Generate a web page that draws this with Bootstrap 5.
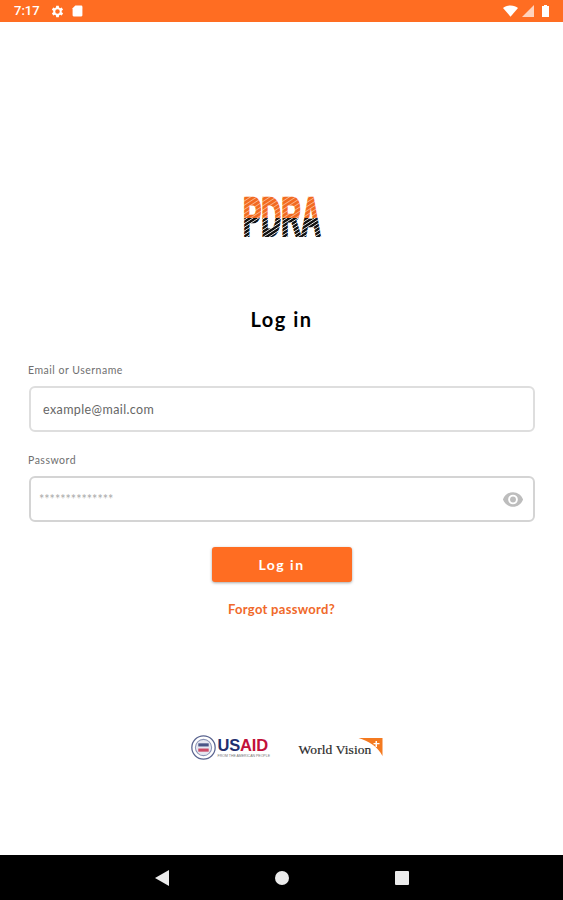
<!DOCTYPE html>
<html lang="en">
<head>
  <meta charset="UTF-8">
  <meta name="viewport" content="width=device-width, initial-scale=1.0">
  <title>PDRA - Log in</title>
  <link href="https://cdn.jsdelivr.net/npm/bootstrap@5.3.0/dist/css/bootstrap.min.css" rel="stylesheet">
  <style>
    body {
      font-family: 'Lato', sans-serif;
      height: 900px;
      overflow: hidden;
    }
    .status-bar {
      height: 22px;
      background: #ff6d22;
      color: #fff;
      font-family: 'Roboto', sans-serif;
      font-size: 13px;
      padding: 0 14px;
    }
    .status-time {
      margin-right: 11px;
    }
    .login-page {
      padding: 175px 28px 0;
    }
    .brand-logo {
      display: block;
      margin: 0 auto 64px;
      overflow: visible;
    }
    .login-title {
      font-size: 20px;
      line-height: 36px;
      font-weight: 700;
      letter-spacing: 1.5px;
      color: #000;
      margin-bottom: 27px;
    }
    .field-group {
      margin-bottom: 22px;
    }
    .pass-group {
      margin-bottom: 25px;
    }
    .field-label {
      display: block;
      font-size: 10.5px;
      line-height: 12px;
      letter-spacing: .5px;
      color: #6f6f6f;
      margin-bottom: 10px;
    }
    .field-input.form-control {
      height: 46px;
      margin-left: 1px;
      width: 506px;
      border: 2px solid #dedede;
      border-radius: 6px;
      padding: 0 12px;
      font-size: 12.5px;
      letter-spacing: .4px;
      color: #555;
    }
    .field-input::placeholder {
      color: #666;
      opacity: 1;
    }
    .field-input.pass-input {
      border-color: #d4d4d4;
      padding-left: 8px;
    }
    .field-input.pass-input::placeholder {
      color: #aaa;
      letter-spacing: 0;
    }
    .eye-toggle {
      top: 16px;
      right: 11px;
      line-height: 0;
    }
    .login-btn.btn {
      width: 140px;
      height: 35px;
      padding: 0;
      background: #ff6d22;
      border: 0;
      border-radius: 3px;
      color: #fff;
      font-size: 14px;
      font-weight: 700;
      letter-spacing: 1.5px;
      box-shadow: 0 1px 3px rgba(0, 0, 0, .35);
    }
    .forgot-block {
      gap: 19px;
    }
    .forgot-link {
      color: #f0692a;
      font-size: 13px;
      font-weight: 700;
      letter-spacing: .3px;
      text-decoration: none;
      line-height: 16px;
    }
    .partner-row {
      margin-top: 118px;
      gap: 27px;
      padding-left: 12px;
    }
    .usaid-text {
      width: 54px;
      margin-left: 2px;
      line-height: 1;
    }
    .usaid-word {
      font-family: 'Liberation Sans', sans-serif;
      font-size: 16.5px;
      font-weight: 700;
      letter-spacing: -.2px;
    }
    .usaid-us {
      color: #1f2f6e;
    }
    .usaid-aid {
      color: #c2113a;
    }
    .usaid-tag {
      font-family: 'Liberation Sans', sans-serif;
      font-size: 3.5px;
      color: #777;
      white-space: nowrap;
      margin-top: 1px;
    }
    .wv-word {
      font-family: 'Liberation Serif', serif;
      font-size: 13.5px;
      font-weight: 500;
      line-height: 14px;
      letter-spacing: .1px;
      color: #2a2a2a;
      white-space: nowrap;
      -webkit-text-stroke: .2px #2a2a2a;
    }
    .wv-mark {
      margin: 0 0 1px -14px;
    }
    .nav-bar {
      height: 45px;
      background: #000;
      gap: 106px;
    }
  </style>
</head>
<body class="d-flex flex-column bg-white">
  <div class="status-bar d-flex align-items-center">
    <span class="status-time fw-medium">7:17</span>
    <svg class="me-2" width="13" height="13" viewBox="3 2 20 20" fill="#fff"><path d="M19.400 13a7.500 7.500 0 0 0 0-2l2.100-1.600-2-3.500-2.500 1a7.600 7.600 0 0 0-1.700-1L15 3.200h-4l-.4 2.700a7.600 7.600 0 0 0-1.700 1l-2.500-1-2 3.500L6.500 11a7.500 7.500 0 0 0 0 2l-2.100 1.600 2 3.500 2.500-1a7.600 7.600 0 0 0 1.700 1l.4 2.700h4l.4-2.700a7.600 7.600 0 0 0 1.700-1l2.500 1 2-3.500zM13 15.500a3.500 3.500 0 1 1 0-7 3.500 3.500 0 0 1 0 7z"/></svg>
    <svg width="11" height="12" viewBox="0 0 20 22" fill="#fff"><path d="M6 1h11a2 2 0 0 1 2 2v16a2 2 0 0 1-2 2H3a2 2 0 0 1-2-2V6z"/></svg>
    <div class="ms-auto d-flex align-items-center gap-1">
      <svg width="15" height="12" viewBox="0 0 24 18" fill="#fff"><path d="M12 18 0 4C3 1.500 7 0 12 0s9 1.500 12 4z"/></svg>
      <svg width="12" height="12" viewBox="0 0 12 12" fill="#fff" fill-opacity=".7"><path d="M12 0v12H0z"/></svg>
      <svg class="ms-1" width="7" height="12" viewBox="0 0 7 12" fill="#fff"><path d="M2 0h3v1h2v11H0V1h2z"/></svg>
    </div>
  </div>

  <main class="login-page flex-grow-1">
    <svg class="brand-logo" width="80" height="40" viewBox="0 0 80 40">
      <defs>
        <pattern id="pdraStripes" width="80" height="3.500" patternUnits="userSpaceOnUse" patternTransform="rotate(-18)">
          <rect width="80" height="3.500" fill="#111"/>
          <rect y="2.700" width="80" height=".8" fill="#fff"/>
        </pattern>
        <pattern id="pdraTop" width="80" height="4" patternUnits="userSpaceOnUse" patternTransform="rotate(-18)">
          <rect width="80" height="4" fill="#f26a21"/>
          <rect y="3.200" width="80" height=".8" fill="#fbc7a4"/>
        </pattern>
        <clipPath id="pdraUpper"><rect x="-2" y="-2" width="84" height="23"/></clipPath>
        <clipPath id="pdraLower"><rect x="-2" y="21" width="84" height="19"/></clipPath>
      </defs>
      <g font-family="'Liberation Sans', sans-serif" font-weight="700" font-size="55" stroke-width="2.400">
        <g clip-path="url(#pdraUpper)">
          <text transform="translate(1 39) scale(.5 1)" fill="url(#pdraTop)" stroke="url(#pdraTop)">PDRA</text>
        </g>
        <g clip-path="url(#pdraLower)">
          <text transform="translate(1 39) scale(.5 1)" fill="url(#pdraStripes)" stroke="url(#pdraStripes)" aria-hidden="true">PDRA</text>
        </g>
      </g>
    </svg>

    <h1 class="login-title text-center">Log in</h1>

    <form>
      <div class="field-group">
        <label class="field-label" for="email">Email or Username</label>
        <input class="field-input form-control" id="email" type="text" placeholder="example@mail.com">
      </div>
      <div class="pass-group">
        <label class="field-label" for="password">Password</label>
        <div class="position-relative">
          <input class="field-input pass-input form-control" id="password" type="text" placeholder="**************">
          <span class="eye-toggle position-absolute">
            <svg width="22" height="15" viewBox="0 0 24 16" fill="#bdbdbd"><path fill-rule="evenodd" d="M12 0C7 0 2.700 3.300 1 8c1.700 4.700 6 8 11 8s9.300-3.300 11-8c-1.700-4.700-6-8-11-8zm0 13.300A5.300 5.300 0 1 1 12 2.700a5.300 5.300 0 0 1 0 10.600z"/><circle cx="12" cy="8" r="3.200"/></svg>
          </span>
        </div>
      </div>
      <div class="forgot-block d-flex flex-column align-items-center">
        <button class="login-btn btn" type="button">Log in</button>
        <a class="forgot-link" href="#">Forgot password?</a>
      </div>
    </form>

    <div class="partner-row d-flex justify-content-center align-items-center">
      <div class="d-flex align-items-center">
        <svg width="25" height="25" viewBox="0 0 24 24">
          <circle cx="12" cy="12" r="11.200" fill="#fff" stroke="#5a648f" stroke-width="1.200"/>
          <circle cx="12" cy="12" r="7.800" fill="#e6e8f1" stroke="#8a93b5" stroke-width="1"/>
          <rect x="7" y="8" width="10" height="3" fill="#4a5687"/>
          <rect x="7" y="13" width="10" height="3" fill="#cc4a66"/>
        </svg>
        <div class="usaid-text">
          <div class="usaid-word"><span class="usaid-us">US</span><span class="usaid-aid">AID</span></div>
          <div class="usaid-tag">FROM THE AMERICAN PEOPLE</div>
        </div>
      </div>
      <div class="d-flex align-items-end">
        <span class="wv-word">World Vision</span>
        <svg class="wv-mark" width="27" height="18" viewBox="0 0 24 18"><path d="M0 0h24v18C19 8 10 3 0 0z" fill="#f47a20"/><path d="M17 3h1.500v2H21v1.300h-2.500V9H17V6.300h-2V5h2z" fill="#fff"/></svg>
      </div>
    </div>
  </main>

  <div class="nav-bar d-flex justify-content-center align-items-center">
    <svg width="14" height="16" viewBox="0 0 14 16" fill="#ececec"><path d="M14 0v16L0 8z"/></svg>
    <svg width="14" height="14" viewBox="0 0 14 14" fill="#ececec"><circle cx="7" cy="7" r="7"/></svg>
    <svg width="14" height="14" viewBox="0 0 14 14" fill="#ececec"><rect width="14" height="14" rx="1"/></svg>
  </div>

  <script src="https://cdn.jsdelivr.net/npm/bootstrap@5.3.0/dist/js/bootstrap.bundle.min.js"></script>
</body>
</html>
